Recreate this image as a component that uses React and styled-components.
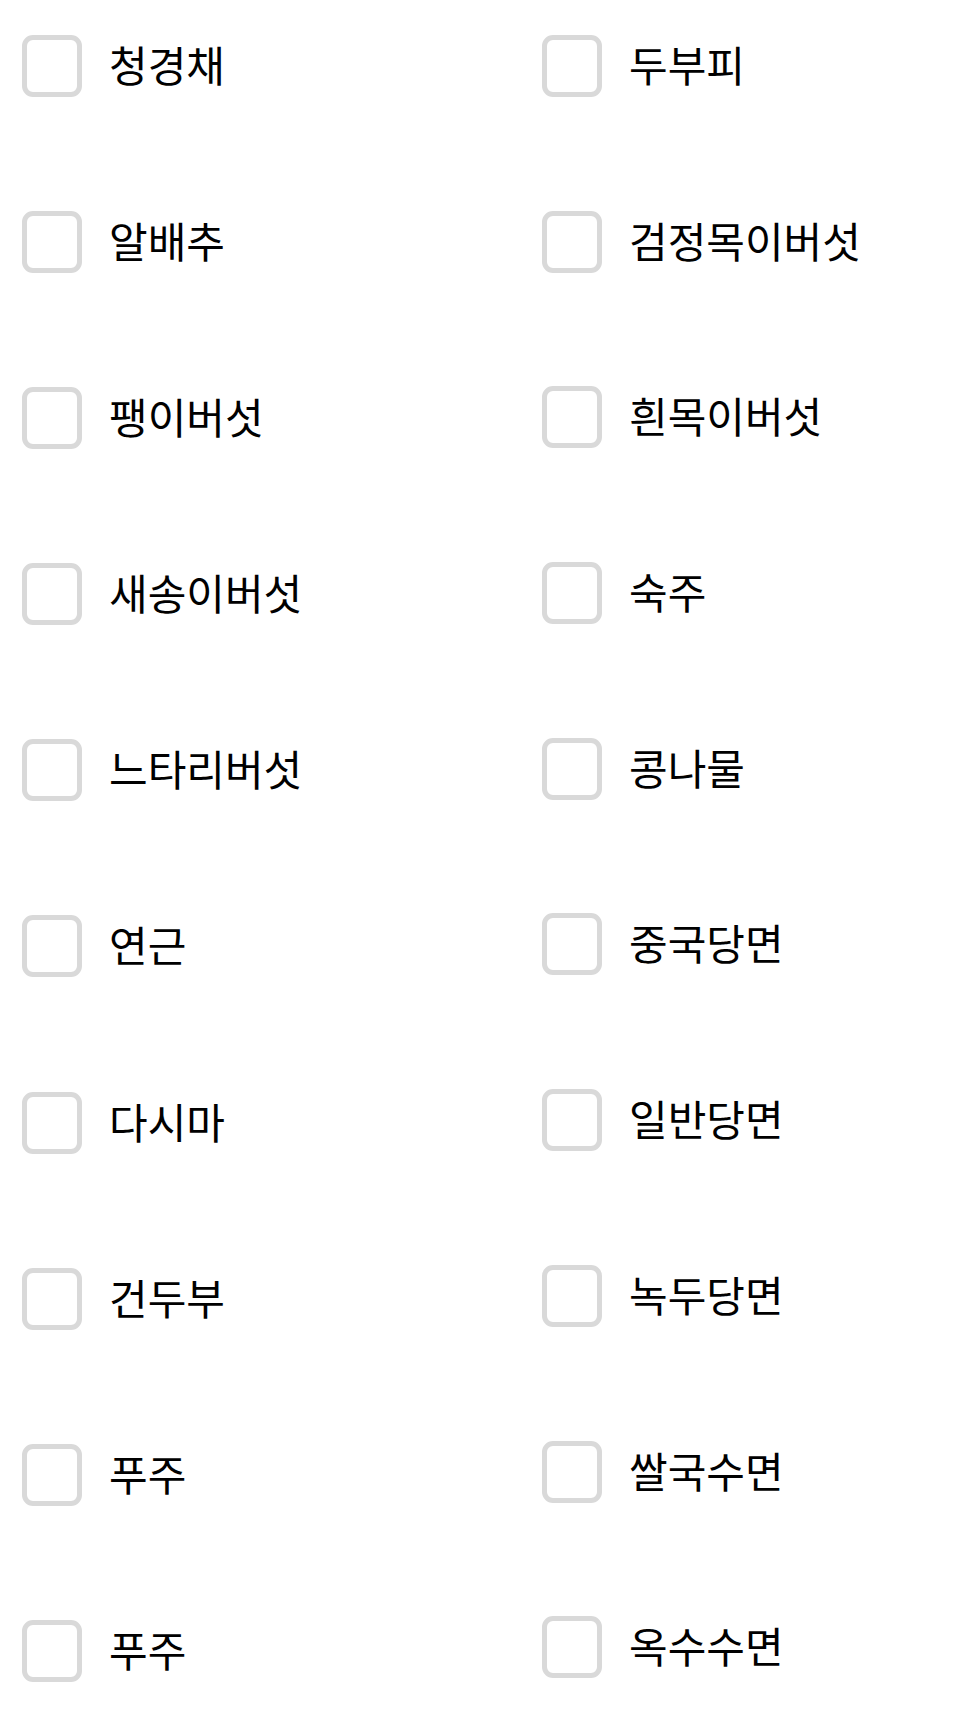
import React from "react";
import styled, { createGlobalStyle } from "styled-components";

const Global = createGlobalStyle`
  html, body { margin: 0; padding: 0; background: #ffffff; }
  body { font-family: "Noto Sans CJK KR", "Noto Sans", sans-serif; }
`;

const Page = styled.div`
  width: 966px;
  height: 1717px;
  display: grid;
  grid-template-columns: 520px 446px;
  overflow: hidden;
  background: #ffffff;
`;

const Column = styled.div`
  display: flex;
  flex-direction: column;
  gap: ${(p) => p.$gap}px;
  padding: 35px 0 0 22px;
`;

const Item = styled.label`
  display: flex;
  align-items: center;
  height: 62px;
  gap: 27px;
  cursor: pointer;
`;

const Box = styled.span`
  box-sizing: border-box;
  flex: none;
  width: 60px;
  height: 62px;
  border: 5px solid #d9d9d9;
  border-radius: 11px;
  background: #ffffff;
`;

const Text = styled.span`
  font-size: 42px;
  font-weight: 400;
  line-height: 1;
  color: #000000;
  white-space: nowrap;
  position: relative;
  top: -2px;
`;

const left = ["청경채", "알배추", "팽이버섯", "새송이버섯", "느타리버섯", "연근", "다시마", "건두부", "푸주", "푸주"];
const right = ["두부피", "검정목이버섯", "흰목이버섯", "숙주", "콩나물", "중국당면", "일반당면", "녹두당면", "쌀국수면", "옥수수면"];

export default function App() {
  return (
    <>
      <Global />
      <Page>
        <Column $gap={114.1}>
          {left.map((t, i) => (
            <Item key={i}>
              <Box />
              <Text>{t}</Text>
            </Item>
          ))}
        </Column>
        <Column $gap={113.7}>
          {right.map((t, i) => (
            <Item key={i}>
              <Box />
              <Text>{t}</Text>
            </Item>
          ))}
        </Column>
      </Page>
    </>
  );
}
